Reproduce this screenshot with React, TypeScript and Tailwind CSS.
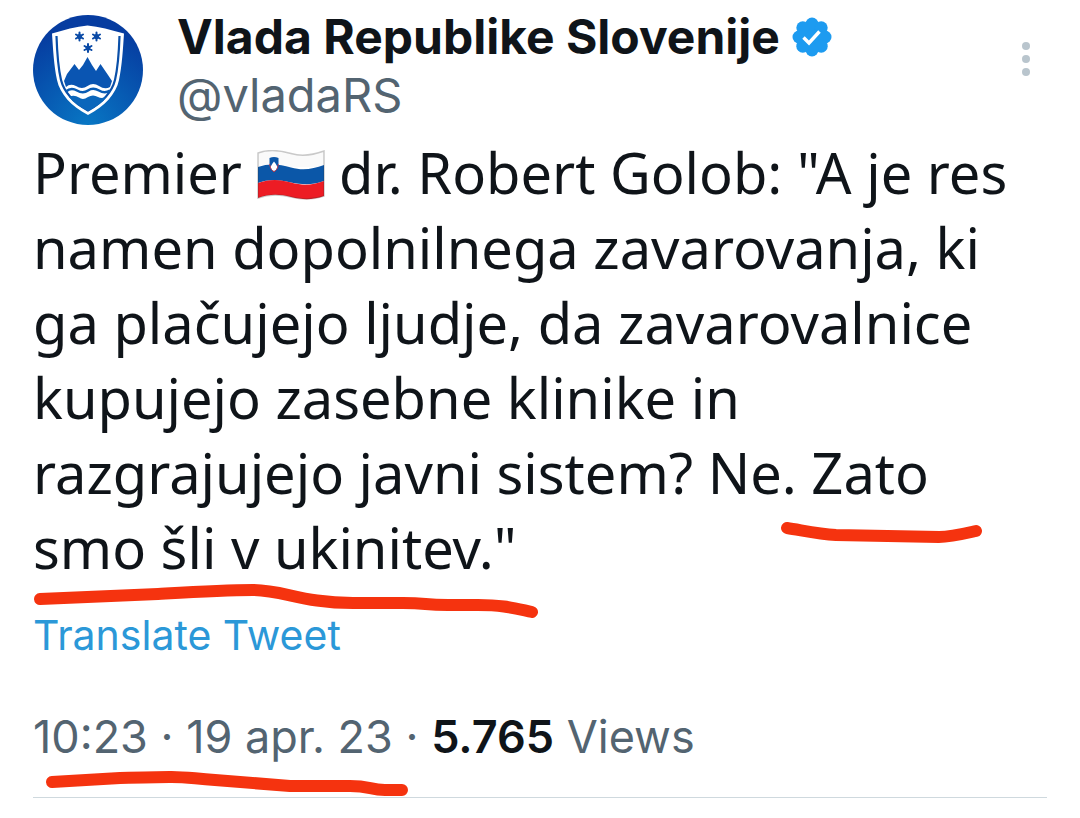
import React from 'react';

const Avatar = () => (
    <svg viewBox="0 0 110 110" className="h-[110px] w-[110px] shrink-0" role="img" aria-label="Vlada Republike Slovenije">
        <defs>
            <radialGradient id="disc" cx="0.5" cy="1" r="0.9">
                <stop offset="0" stopColor="#0877c4" />
                <stop offset="0.55" stopColor="#0756b0" />
                <stop offset="1" stopColor="#063ca0" />
            </radialGradient>
        </defs>
        <circle cx="55" cy="55" r="55" fill="url(#disc)" />
        <path
            d="M19 18.500C31 15 43 11.500 54.500 10.500C66 11.500 78 15 91 18.500C90 34 89 51 86 65C83 79 72 91 55 100C38 91 27 79 24 65C21 51 20 34 19 18.500Z"
            fill="#fff"
        />
        <path
            d="M23.500 21C24 37 25 52 28 65C31 77 40 87 55 95.500C70 87 79 77 82 65C85 52 86 37 86.500 21"
            fill="none"
            stroke="#0a4fa8"
            strokeWidth="2.200"
        />
        <path d="M31 66L34 59L41.500 49L46 55L50 50L54.500 42L59 50L63 56L67.500 49L75 60L79 66L77 72Q72 75 66 71Q60 67 54.500 71Q49 75 43 71Q37 68 33 72Z" fill="#0a55b2" />
        <path
            d="M33 76.500Q38 72 44 75.500Q50 79 55 75.500Q60 72 66 75.500Q72 79 77 75.500"
            fill="none"
            stroke="#0a5cb4"
            strokeWidth="2.600"
        />
        <path d="M36 82Q41 79.500 46 82.500Q50 85.500 55 82Q60 79 65 82Q69 84 74 81.500Q68 90 55 96Q42 90 36 82Z" fill="#0b66bb" />
        <g stroke="#0a4aa6" strokeWidth="2" strokeLinecap="round">
            <path d="M46.500 17.500V25.500M43 19.500L50 23.500M50 19.500L43 23.500" />
            <path d="M63.500 17.500V25.500M60 19.500L67 23.500M67 19.500L60 23.500" />
            <path d="M55 29V37M51.500 31L58.500 35M58.500 31L51.500 35" />
        </g>
        <g fill="#0a4aa6">
            <circle cx="46.500" cy="21.500" r="2.600" />
            <circle cx="63.500" cy="21.500" r="2.600" />
            <circle cx="55" cy="33" r="2.600" />
        </g>
    </svg>
);

const VerifiedBadge = () => (
    <svg viewBox="0 0 40 40" className="h-10 w-10 shrink-0" role="img" aria-label="Verified account">
        <g fill="#1d9bf0">
            <circle cx="20" cy="20" r="15" />
            <circle cx="20" cy="7" r="6.500" />
            <circle cx="29.200" cy="10.800" r="6.500" />
            <circle cx="33" cy="20" r="6.500" />
            <circle cx="29.200" cy="29.200" r="6.500" />
            <circle cx="20" cy="33" r="6.500" />
            <circle cx="10.800" cy="29.200" r="6.500" />
            <circle cx="7" cy="20" r="6.500" />
            <circle cx="10.800" cy="10.800" r="6.500" />
        </g>
        <path d="M11.500 20.500L17 26L27.500 14.500" fill="none" stroke="#fff" strokeWidth="3.400" />
    </svg>
);

const Flag = () => (
    <svg viewBox="0 0 68 50" className="inline-block h-[50px] w-[68px] align-[-6px]" role="img" aria-label="Slovenija">
        <path d="M1 3C12 -1 22 0 34 3.500S56 5 67 1V17H1Z" fill="#fafafa" />
        <path d="M1 17C12 13 22 14 34 17.500S56 19 67 15V31C56 35 46 35 34 32.500S12 29 1 33Z" fill="#0b57a8" />
        <path d="M1 33C12 29 22 29 34 32.500S56 35 67 31V46C56 50 46 50 34 47S12 44 1 48Z" fill="#ed1c24" />
        <path d="M1 3C12 -1 22 0 34 3.500S56 5 67 1V46C56 50 46 50 34 47S12 44 1 48Z" fill="none" stroke="#303030" strokeOpacity="0.25" strokeWidth="1.500" />
        <path d="M12.500 8Q17 6 21.500 8V14Q21 20 17 22Q13 20 12.500 14Z" fill="#0b57a8" />
        <path d="M13.500 17L15.500 13.500L17 11.500L18.500 13.500L20.500 17Q19.500 20 17 21Q14.500 20 13.500 17Z" fill="#fff" />
        <path d="M12.500 14Q13 20 17 22Q21 20 21.500 14" fill="none" stroke="#d9363e" strokeWidth="0.800" />
    </svg>
);

type StrokeProps = { d: string; viewBox: string; className: string };

const MarkerStroke = ({ d, viewBox, className }: StrokeProps) => (
    <svg viewBox={viewBox} className={`pointer-events-none absolute ${className}`} aria-hidden="true">
        <path d={d} fill="none" stroke="#f5330f" strokeWidth="12" strokeLinecap="round" strokeLinejoin="round" />
    </svg>
);

const App = () => {
    return (
        <main className="min-h-screen bg-white font-['Inter',sans-serif] text-[#0f1419]">
            <article className="px-[33px] pt-2">
                <header className="flex items-start">
                    <div className="pt-[7px]">
                        <Avatar />
                    </div>
                    <div className="ml-[34px] min-w-0 flex-1">
                        <div className="flex items-center gap-3">
                            <h1 className="text-[48px] leading-[58px] font-bold">Vlada Republike Slovenije</h1>
                            <VerifiedBadge />
                        </div>
                        <a href="#profile" className="block w-fit text-[47px] leading-[58px] text-[#536471]">
                            @vladaRS
                        </a>
                    </div>
                    <button type="button" aria-label="More" className="mt-8 mr-3 shrink-0 px-1">
                        <svg viewBox="0 0 10 38" className="h-[38px] w-[10px]" fill="#b9c5cd">
                            <circle cx="5" cy="6" r="4" />
                            <circle cx="5" cy="19" r="4" />
                            <circle cx="5" cy="32" r="4" />
                        </svg>
                    </button>
                </header>

                <p className="mt-[10px] font-['Noto_Sans',sans-serif] text-[56px] leading-[75px]">
                    Premier <Flag /> dr. Robert Golob: "A je res namen dopolnilnega zavarovanja, ki ga plačujejo ljudje, da
                    zavarovalnice kupujejo zasebne klinike in razgrajujejo javni sistem? Ne.{' '}
                    <span className="relative inline-block">
                        Zato
                        <MarkerStroke
                            viewBox="0 0 204 28"
                            className="top-[84px] -left-8 h-7 w-[204px] max-w-none"
                            d="M8 9C22 11 38 15 57 16L160 18C172 18 188 14 197 12"
                        />
                    </span>{' '}
                    <span className="relative inline-block">
                        smo šli v ukinitev."
                        <MarkerStroke
                            viewBox="0 0 510 36"
                            className="top-[72px] left-0 h-9 w-[510px] max-w-none"
                            d="M7 17L125 12C175 9 190 8 220 8C250 8 270 21 320 21H370C395 21 390 23 415 23H445C470 23 480 26 499 30"
                        />
                    </span>
                </p>

                <a href="#translate" className="mt-6 block w-fit text-[41px] leading-[52px] text-[#2b98d8]">
                    Translate Tweet
                </a>

                <div className="relative mt-9 border-b border-[#cfd9de] pt-3 pb-8 text-[45px] leading-[56px] text-[#536471]">
                    <time>10:23 · 19 apr. 23</time> · <strong className="font-semibold text-[#0f1419]">5.765</strong> Views
                    <MarkerStroke
                        viewBox="0 0 364 28"
                        className="bottom-0 left-3 h-7 w-[364px] max-w-none"
                        d="M7 13L75 9C145 7 130 8 170 11L245 17H305C325 17 325 21 340 21H357"
                    />
                </div>
            </article>
        </main>
    );
};

export default App;
